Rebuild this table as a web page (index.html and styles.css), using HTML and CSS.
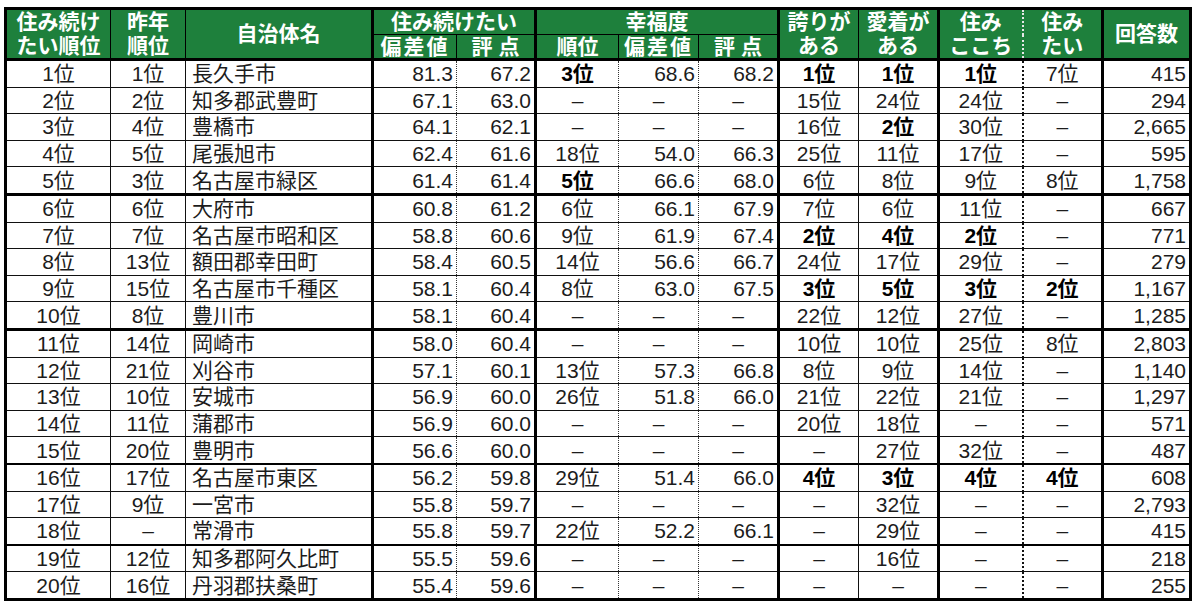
FILE: index.html
```html
<!DOCTYPE html>
<html lang="ja">
<head>
<meta charset="utf-8">
<title>住み続けたい街ランキング</title>
<link rel="stylesheet" href="styles.css">
</head>
<body>
<table class="rank">
  <colgroup>
    <col class="w1"><col class="w2"><col class="w3"><col class="w4"><col class="w5"><col class="w6"><col class="w7"><col class="w8"><col class="w9"><col class="w10"><col class="w11"><col class="w12"><col class="w13">
  </colgroup>
  <thead>
    <tr class="h1">
      <th rowspan="2" class="hs hl">住み続け<br>たい順位</th>
      <th rowspan="2" class="hs">昨年<br>順位</th>
      <th rowspan="2" class="hk">自治体名</th>
      <th colspan="2" class="hk hg">住み続けたい</th>
      <th colspan="3" class="hk hg">幸福度</th>
      <th rowspan="2" class="hs">誇りが<br>ある</th>
      <th rowspan="2" class="hk">愛着が<br>ある</th>
      <th rowspan="2" class="hd">住み<br>ここち</th>
      <th rowspan="2" class="hk">住み<br>たい</th>
      <th rowspan="2" class="hk">回答数</th>
    </tr>
    <tr class="h2">
      <th class="hdot sp1">偏差値</th>
      <th class="hk sp2">評点</th>
      <th class="hdot">順位</th>
      <th class="hdot sp1">偏差値</th>
      <th class="hk sp2">評点</th>
    </tr>
  </thead>
  <tbody>
    <tr><td>1位</td><td>1位</td><td>長久手市</td><td>81.3</td><td>67.2</td><td><b>3位</b></td><td>68.6</td><td>68.2</td><td><b>1位</b></td><td><b>1位</b></td><td><b>1位</b></td><td>7位</td><td>415</td></tr>
    <tr><td>2位</td><td>2位</td><td>知多郡武豊町</td><td>67.1</td><td>63.0</td><td>–</td><td class="c">–</td><td class="c">–</td><td>15位</td><td>24位</td><td>24位</td><td>–</td><td>294</td></tr>
    <tr><td>3位</td><td>4位</td><td>豊橋市</td><td>64.1</td><td>62.1</td><td>–</td><td class="c">–</td><td class="c">–</td><td>16位</td><td><b>2位</b></td><td>30位</td><td>–</td><td>2,665</td></tr>
    <tr><td>4位</td><td>5位</td><td>尾張旭市</td><td>62.4</td><td>61.6</td><td>18位</td><td>54.0</td><td>66.3</td><td>25位</td><td>11位</td><td>17位</td><td>–</td><td>595</td></tr>
    <tr class="thick"><td>5位</td><td>3位</td><td>名古屋市緑区</td><td>61.4</td><td>61.4</td><td><b>5位</b></td><td>66.6</td><td>68.0</td><td>6位</td><td>8位</td><td>9位</td><td>8位</td><td>1,758</td></tr>
    <tr><td>6位</td><td>6位</td><td>大府市</td><td>60.8</td><td>61.2</td><td>6位</td><td>66.1</td><td>67.9</td><td>7位</td><td>6位</td><td>11位</td><td>–</td><td>667</td></tr>
    <tr><td>7位</td><td>7位</td><td>名古屋市昭和区</td><td>58.8</td><td>60.6</td><td>9位</td><td>61.9</td><td>67.4</td><td><b>2位</b></td><td><b>4位</b></td><td><b>2位</b></td><td>–</td><td>771</td></tr>
    <tr><td>8位</td><td>13位</td><td>額田郡幸田町</td><td>58.4</td><td>60.5</td><td>14位</td><td>56.6</td><td>66.7</td><td>24位</td><td>17位</td><td>29位</td><td>–</td><td>279</td></tr>
    <tr><td>9位</td><td>15位</td><td>名古屋市千種区</td><td>58.1</td><td>60.4</td><td>8位</td><td>63.0</td><td>67.5</td><td><b>3位</b></td><td><b>5位</b></td><td><b>3位</b></td><td><b>2位</b></td><td>1,167</td></tr>
    <tr class="thick"><td>10位</td><td>8位</td><td>豊川市</td><td>58.1</td><td>60.4</td><td>–</td><td class="c">–</td><td class="c">–</td><td>22位</td><td>12位</td><td>27位</td><td>–</td><td>1,285</td></tr>
    <tr><td>11位</td><td>14位</td><td>岡崎市</td><td>58.0</td><td>60.4</td><td>–</td><td class="c">–</td><td class="c">–</td><td>10位</td><td>10位</td><td>25位</td><td>8位</td><td>2,803</td></tr>
    <tr><td>12位</td><td>21位</td><td>刈谷市</td><td>57.1</td><td>60.1</td><td>13位</td><td>57.3</td><td>66.8</td><td>8位</td><td>9位</td><td>14位</td><td>–</td><td>1,140</td></tr>
    <tr><td>13位</td><td>10位</td><td>安城市</td><td>56.9</td><td>60.0</td><td>26位</td><td>51.8</td><td>66.0</td><td>21位</td><td>22位</td><td>21位</td><td>–</td><td>1,297</td></tr>
    <tr><td>14位</td><td>11位</td><td>蒲郡市</td><td>56.9</td><td>60.0</td><td>–</td><td class="c">–</td><td class="c">–</td><td>20位</td><td>18位</td><td>–</td><td>–</td><td>571</td></tr>
    <tr class="mid"><td>15位</td><td>20位</td><td>豊明市</td><td>56.6</td><td>60.0</td><td>–</td><td class="c">–</td><td class="c">–</td><td>–</td><td>27位</td><td>32位</td><td>–</td><td>487</td></tr>
    <tr><td>16位</td><td>17位</td><td>名古屋市東区</td><td>56.2</td><td>59.8</td><td>29位</td><td>51.4</td><td>66.0</td><td><b>4位</b></td><td><b>3位</b></td><td><b>4位</b></td><td><b>4位</b></td><td>608</td></tr>
    <tr><td>17位</td><td>9位</td><td>一宮市</td><td>55.8</td><td>59.7</td><td>–</td><td class="c">–</td><td class="c">–</td><td>–</td><td>32位</td><td>–</td><td>–</td><td>2,793</td></tr>
    <tr class="mid"><td>18位</td><td>–</td><td>常滑市</td><td>55.8</td><td>59.7</td><td>22位</td><td>52.2</td><td>66.1</td><td>–</td><td>29位</td><td>–</td><td>–</td><td>415</td></tr>
    <tr><td>19位</td><td>12位</td><td>知多郡阿久比町</td><td>55.5</td><td>59.6</td><td>–</td><td class="c">–</td><td class="c">–</td><td>–</td><td>16位</td><td>–</td><td>–</td><td>218</td></tr>
    <tr><td>20位</td><td>16位</td><td>丹羽郡扶桑町</td><td>55.4</td><td>59.6</td><td>–</td><td class="c">–</td><td class="c">–</td><td>–</td><td>–</td><td>–</td><td>–</td><td>255</td></tr>
  </tbody>
</table>
</body>
</html>
```

FILE: styles.css
```css
html, body {
  margin: 0;
  padding: 0;
  background: #fff;
}

body {
  padding: 7px 0 0 4px;
  font-family: "Liberation Sans", "Noto Sans CJK JP", sans-serif;
  color: #1c1c1c;
}

.rank {
  border-collapse: collapse;
  table-layout: fixed;
  width: 1187px;
  border: 3px solid #000;
  font-size: 21px;
}

.w1 { width: 105px; }
.w2 { width: 75px; }
.w3 { width: 187px; }
.w4 { width: 84px; }
.w5 { width: 79px; }
.w6 { width: 83px; }
.w7 { width: 80px; }
.w8 { width: 80px; }
.w9 { width: 80px; }
.w10 { width: 80px; }
.w11 { width: 84px; }
.w12 { width: 80px; }
.w13 { width: 88px; }

/* header */
.rank th {
  background: #1e803c;
  color: #fff;
  font-weight: bold;
  padding: 0;
  line-height: 24px;
  text-align: center;
  vertical-align: middle;
  border: 1px solid #000;
}

.rank .h1 th.hg {
  height: 24px;
  line-height: 24px;
}

.rank .h2 th {
  height: 23px;
  line-height: 23px;
  border-bottom: 3px solid #000;
}

.rank thead .h1 th[rowspan] {
  border-bottom: 3px solid #000;
}

.rank th.hk { border-right: 3px solid #000; }
.rank th.hs { border-right: 1px solid #000; }
.rank th.hd { border-right: 2px dotted #e8e8e8; }
.rank th.hdot { border-right: 1px dotted #d8d8d8; }
.rank th.hl { border-left: 3px solid #000; }

.sp1 { letter-spacing: 2px; }
.sp2 { letter-spacing: 6px; text-indent: 6px; }

/* body */
.rank td {
  height: 25.6px;
  padding: 0 4px;
  line-height: 25px;
  white-space: nowrap;
  border-top: 1px solid #111;
  border-bottom: 1px solid #111;
  border-left: none;
  text-align: center;
}

.rank td b { font-weight: bold; color: #000; }

.rank td:nth-child(1) { border-left: 3px solid #000; border-right: 1px solid #111; }
.rank td:nth-child(2) { border-right: 1px solid #111; }
.rank td:nth-child(3) { border-right: 3px solid #000; text-align: left; padding-left: 6px; }
.rank td:nth-child(4) { border-right: 1px dotted #333; text-align: right; padding-right: 3px; }
.rank td:nth-child(5) { border-right: 3px solid #000; text-align: right; padding-right: 3px; }
.rank td:nth-child(6) { border-right: 1px dotted #333; }
.rank td:nth-child(7) { border-right: 1px dotted #333; text-align: right; padding-right: 3px; }
.rank td:nth-child(8) { border-right: 3px solid #000; text-align: right; padding-right: 3px; }
.rank td:nth-child(9) { border-right: 1px solid #111; }
.rank td:nth-child(10) { border-right: 3px solid #000; }
.rank td:nth-child(11) { border-right: 2px dotted #111; }
.rank td:nth-child(12) { border-right: 3px solid #000; }
.rank td:nth-child(13) { border-right: 3px solid #000; text-align: right; padding-right: 3px; }

.rank td.c { text-align: center; padding-right: 4px; }

.rank tr.thick td { border-bottom: 3px solid #000; }
.rank tr.mid td { border-bottom: 2px solid #000; }
```
